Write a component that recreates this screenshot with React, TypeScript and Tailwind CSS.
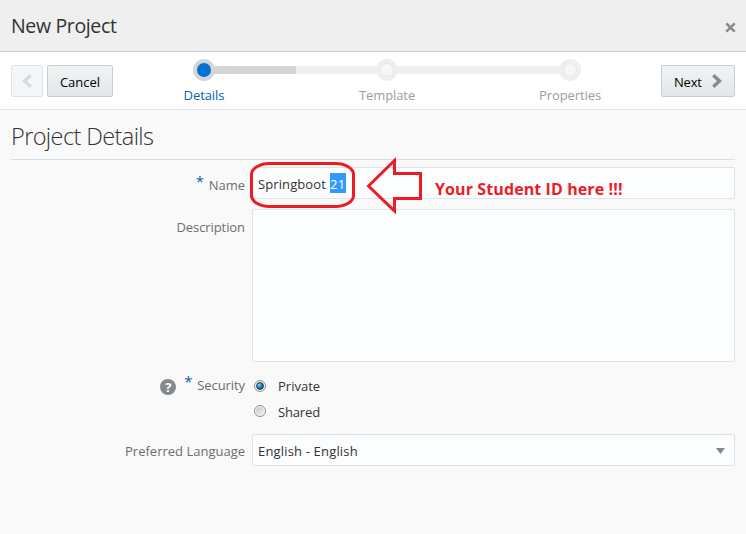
import type { ReactNode } from "react";

function Chevron({ dir, color }: { dir: "left" | "right"; color: string }) {
  return (
    <svg width="10" height="14" viewBox="0 0 10 14" className={dir === "left" ? "-scale-x-100" : ""}>
      <path d="M1.3 1.3 7.5 7 1.3 12.7" fill="none" stroke={color} strokeWidth="3.4" />
    </svg>
  );
}

function Step({ label, active, className }: { label: string; active?: boolean; className: string }) {
  return (
    <div className={`z-10 row-start-1 flex flex-col items-center ${className}`}>
      <div className={`flex size-[22px] items-center justify-center rounded-full ${active ? "bg-[#d5d6d7]" : "bg-[#efefef]"}`}>
        <div className={`size-[14px] rounded-full ${active ? "bg-[#0572ce]" : "border border-[#e4e8ec] bg-[#f5f7f9]"}`} />
      </div>
      <span className={`mt-[4px] leading-5 tracking-[-0.08px] whitespace-nowrap ${active ? "text-[#0464b4]" : "text-[#9c9d9e]"}`}>{label}</span>
    </div>
  );
}

function Label({ children, required, help, className }: { children: ReactNode; required?: boolean; help?: boolean; className?: string }) {
  return (
    <div className={`flex w-[245px] shrink-0 justify-end leading-5 whitespace-nowrap text-[#6b6e70] ${className ?? ""}`}>
      {help && (
        <span className="mt-[4px] mr-[8px] flex size-4 items-center justify-center rounded-full bg-[#85898e] text-[13px] leading-4 font-bold text-white">?</span>
      )}
      {required && <span className="-mt-[4px] mr-[5px] w-2 text-[15px] leading-5 text-[#0b63ae]">*</span>}
      {children}
    </div>
  );
}

function Radio({ checked }: { checked?: boolean }) {
  return (
    <span className="flex size-3 items-center justify-center rounded-full border border-[#8e8f8f] bg-[#f6f6f6]">
      {checked ? (
        <span className="size-2 rounded-full border border-[#20405a] bg-[radial-gradient(circle_at_35%_35%,#8edcf8,#1577ac_50%,#0b344f)]" />
      ) : (
        <span className="size-2 rounded-full bg-linear-to-br from-[#c4c8cc] to-[#f2f2f2]" />
      )}
    </span>
  );
}

export default function App() {
  return (
    <div className="relative h-[534px] w-[746px] overflow-hidden bg-[#f9f9f9] font-['Open_Sans','Noto_Sans',sans-serif] text-[13px] text-[#333]">
      <header className="flex h-[52px] items-center justify-between border-b border-[#c4ced7] bg-[#efefef] pr-[10px] pl-[11px]">
        <h1 className="text-[19.5px] leading-6 tracking-[-0.35px] text-[#333]">New Project</h1>
        <svg width="11" height="11" viewBox="0 0 11 11" className="mt-[3px]">
          <path d="M1.3 1.3 9.7 9.7M9.7 1.3 1.3 9.7" stroke="#878b90" strokeWidth="2.6" />
        </svg>
      </header>

      <nav className="flex h-[58px] items-start border-b border-[#dfe4e7] bg-white pl-[11px]">
        <button className="mt-[13px] flex h-8 w-8 items-center justify-center rounded-[2px] border border-[#dfe4e9] bg-[#f5f6f8]">
          <Chevron dir="left" color="#d8dadc" />
        </button>
        <button className="mt-[13px] ml-1 h-8 w-[66px] rounded-[2px] border border-[#c4ced7] bg-linear-to-b from-[#f1f3f3] to-[#e3e7ea] pt-[3px] text-black">Cancel</button>
        <div className="mt-[7px] ml-[61px] grid grid-cols-[60px_123px_60px_123px_60px]">
          <Step label="Details" active className="col-start-1" />
          <div className="col-start-1 col-end-6 row-start-1 mx-[30px] mt-[7px] flex h-2">
            <div className="w-[92px] bg-[#d5d6d7]" />
            <div className="flex-1 bg-[#efefef]" />
          </div>
          <Step label="Template" className="col-start-3" />
          <Step label="Properties" className="col-start-5" />
        </div>
        <button className="mt-[13px] ml-[61px] flex h-8 w-[74px] items-center justify-between rounded-[2px] border border-[#c4ced7] bg-linear-to-b from-[#f1f3f3] to-[#e3e7ea] px-[12px] text-black">
          <span className="pt-[3px] tracking-[-0.2px]">Next</span>
          <Chevron dir="right" color="#878b90" />
        </button>
      </nav>

      <main>
        <div className="mx-[11px] h-[50px] border-b border-[#d6dfe6] pt-[10px]">
          <h2 className="text-[23.5px] leading-8 font-light tracking-[-0.6px] text-[#333]">Project Details</h2>
        </div>

        <div className="mt-[7px] flex gap-[7px]">
          <Label required className="pt-[8px]">Name</Label>
          <div className="h-8 w-[483px] rounded-[2px] border border-[#dfe4e7] bg-[#fcfdfe] pt-[5px] pl-[5px]">
            <div className="flex h-5 leading-[22px] whitespace-pre">
              <span className="w-[72px] tracking-[0.1px]">Springboot </span>
              <span className="w-4 bg-[#3399ff] tracking-[0.4px] text-white">21</span>
            </div>
          </div>
        </div>

        <div className="mt-[10px] flex gap-[7px]">
          <Label className="pt-[8px] tracking-[-0.08px]">Description</Label>
          <div className="h-[153px] w-[483px] rounded-[2px] border border-[#dfe4e7] bg-[#fcfdfe]" />
        </div>

        <div className="mt-[13px] flex h-[59px]">
          <Label required help className="tracking-[-0.08px]">Security</Label>
          <div className="ml-[9px] pt-[1px]">
            <div className="flex h-[26px] items-start gap-3">
              <span className="mt-[4px]"><Radio checked /></span>
              <span className="leading-5">Private</span>
            </div>
            <div className="flex h-[26px] items-start gap-3">
              <span className="mt-[3px]"><Radio /></span>
              <span className="leading-5 tracking-[-0.15px]">Shared</span>
            </div>
          </div>
        </div>

        <div className="flex gap-[7px]">
          <Label className="pt-[7px]">Preferred Language</Label>
          <div className="flex h-8 w-[483px] items-center justify-between rounded-[2px] border border-[#dfe4e7] bg-[#fcfdfe] pr-[9px] pl-[5px]">
            <span className="pt-[3px] tracking-[0.17px]">English - English</span>
            <svg width="9" height="6" viewBox="0 0 9 6" className="mt-[2px]"><path d="M0 0h9L4.5 6z" fill="#85898e" /></svg>
          </div>
        </div>
      </main>

      <svg className="absolute top-[150px] left-[240px]" width="200" height="70" viewBox="240 150 200 70" fill="none" stroke="#ed1c24" strokeWidth="3">
        <rect x="251.5" y="163.5" width="102" height="43" rx="18" ry="11" />
        <path d="M368.500 186 394.500 160.500V173.500H420.500V198.500H394.500V211Z" />
      </svg>
      <div className="absolute top-[178px] left-[435px] text-base leading-[22px] font-bold tracking-[0.1px] whitespace-nowrap text-[#ed1c24]">Your Student ID here !!!</div>
    </div>
  );
}
